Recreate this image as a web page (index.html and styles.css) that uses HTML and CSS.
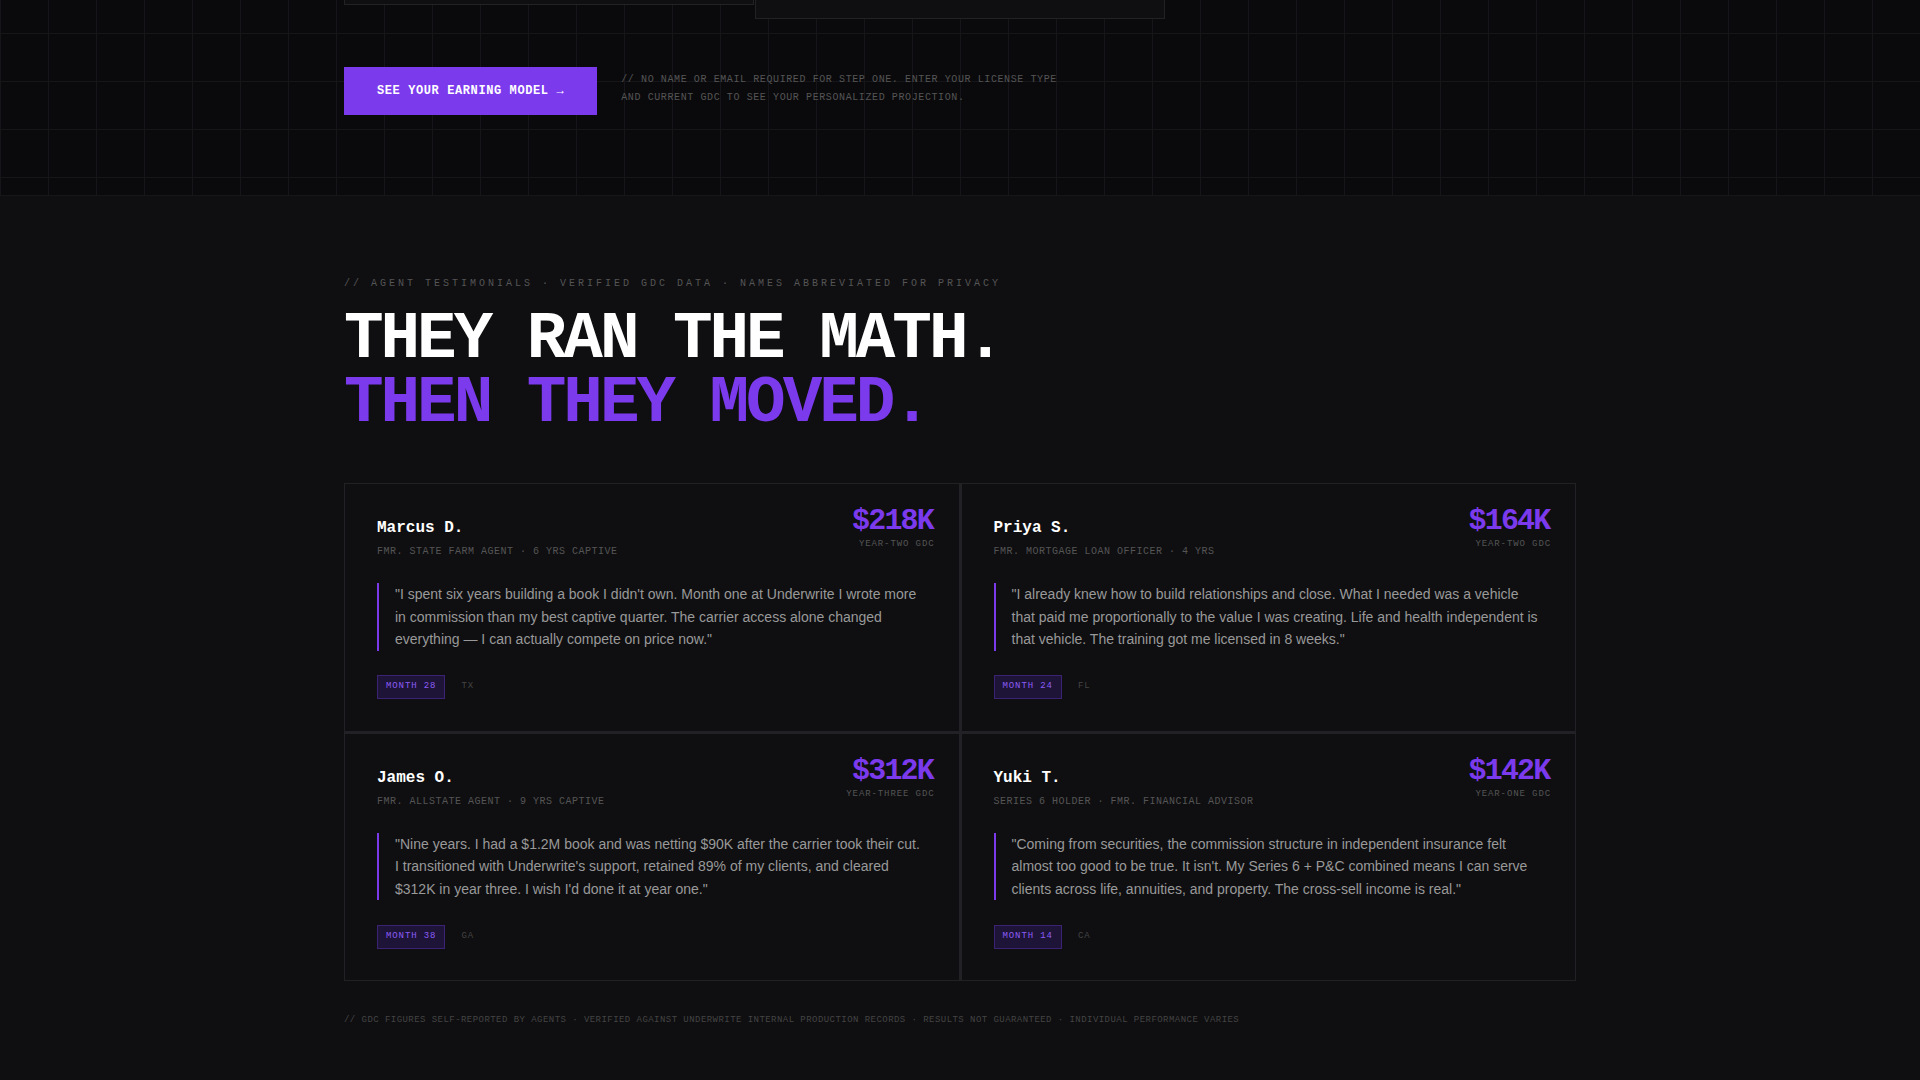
FILE: index.html
```html
<!DOCTYPE html>
<html lang="en">
<head>
  <meta charset="UTF-8" />
  <meta name="viewport" content="width=device-width, initial-scale=1" />
  <title>Underwrite - Agent Testimonials</title>
  <link rel="stylesheet" href="styles.css">
</head>
<body>

  <section class="hero">
    <div class="wrap">
      <div class="hero-boxes">
        <div class="hero-box hero-box-left"></div>
        <div class="hero-box hero-box-right"></div>
      </div>
      <div class="cta-row">
        <a href="#" class="cta">SEE YOUR EARNING MODEL →</a>
        <p class="cta-note">// NO NAME OR EMAIL REQUIRED FOR STEP ONE. ENTER YOUR LICENSE TYPE AND CURRENT GDC TO SEE YOUR PERSONALIZED PROJECTION.</p>
      </div>
    </div>
  </section>

  <section class="proof">
    <div class="wrap">
      <p class="eyebrow">// AGENT TESTIMONIALS · VERIFIED GDC DATA · NAMES ABBREVIATED FOR PRIVACY</p>
      <h2 class="headline">THEY RAN THE MATH.<br><span class="accent">THEN THEY MOVED.</span></h2>

      <div class="cards">
        <article class="card">
          <header class="card-top">
            <div>
              <h3 class="name">Marcus D.</h3>
              <p class="role">FMR. STATE FARM AGENT · 6 YRS CAPTIVE</p>
            </div>
            <div class="earn">
              <div class="earn-num">$218K</div>
              <div class="earn-label">YEAR-TWO GDC</div>
            </div>
          </header>
          <blockquote class="quote">"I spent six years building a book I didn't own. Month one at Underwrite I wrote more in commission than my best captive quarter. The carrier access alone changed everything — I can actually compete on price now."</blockquote>
          <footer class="card-foot">
            <span class="tag">MONTH 28</span>
            <span class="state">TX</span>
          </footer>
        </article>

        <article class="card">
          <header class="card-top">
            <div>
              <h3 class="name">Priya S.</h3>
              <p class="role">FMR. MORTGAGE LOAN OFFICER · 4 YRS</p>
            </div>
            <div class="earn">
              <div class="earn-num">$164K</div>
              <div class="earn-label">YEAR-TWO GDC</div>
            </div>
          </header>
          <blockquote class="quote">"I already knew how to build relationships and close. What I needed was a vehicle that paid me proportionally to the value I was creating. Life and health independent is that vehicle. The training got me licensed in 8 weeks."</blockquote>
          <footer class="card-foot">
            <span class="tag">MONTH 24</span>
            <span class="state">FL</span>
          </footer>
        </article>

        <article class="card">
          <header class="card-top">
            <div>
              <h3 class="name">James O.</h3>
              <p class="role">FMR. ALLSTATE AGENT · 9 YRS CAPTIVE</p>
            </div>
            <div class="earn">
              <div class="earn-num">$312K</div>
              <div class="earn-label">YEAR-THREE GDC</div>
            </div>
          </header>
          <blockquote class="quote">"Nine years. I had a $1.2M book and was netting $90K after the carrier took their cut. I transitioned with Underwrite's support, retained 89% of my clients, and cleared $312K in year three. I wish I'd done it at year one."</blockquote>
          <footer class="card-foot">
            <span class="tag">MONTH 38</span>
            <span class="state">GA</span>
          </footer>
        </article>

        <article class="card">
          <header class="card-top">
            <div>
              <h3 class="name">Yuki T.</h3>
              <p class="role">SERIES 6 HOLDER · FMR. FINANCIAL ADVISOR</p>
            </div>
            <div class="earn">
              <div class="earn-num">$142K</div>
              <div class="earn-label">YEAR-ONE GDC</div>
            </div>
          </header>
          <blockquote class="quote">"Coming from securities, the commission structure in independent insurance felt almost too good to be true. It isn't. My Series 6 + P&amp;C combined means I can serve clients across life, annuities, and property. The cross-sell income is real."</blockquote>
          <footer class="card-foot">
            <span class="tag">MONTH 14</span>
            <span class="state">CA</span>
          </footer>
        </article>
      </div>

      <p class="disclaimer">// GDC FIGURES SELF-REPORTED BY AGENTS · VERIFIED AGAINST UNDERWRITE INTERNAL PRODUCTION RECORDS · RESULTS NOT GUARANTEED · INDIVIDUAL PERFORMANCE VARIES</p>
    </div>
  </section>

</body>
</html>
```

FILE: styles.css
```css
/* Global Styles */
* {
  margin: 0;
  padding: 0;
  box-sizing: border-box;
}

body {
  font-family: "Liberation Mono", monospace;
  background-color: #0f0f11;
  color: #fff;
  overflow: hidden;
  height: 1080px;
}

a {
  text-decoration: none;
  color: inherit;
}

.wrap {
  width: 1232px;
  margin: 0 auto;
}

/* Hero tail */
.hero {
  height: 196px;
  background-color: #0a0a0c;
  background-image:
    linear-gradient(#16161a 1px, transparent 1px),
    linear-gradient(90deg, #16161a 1px, transparent 1px);
  background-size: 48px 48px;
  background-position: 0 -15px;
  border-bottom: 1px solid #16161a;
}

.hero-boxes {
  display: flex;
  align-items: flex-start;
  gap: 1px;
  height: 67px;
}

.hero-box {
  flex: 0 0 410px;
  background: #0f0f11;
  border: 1px solid #222226;
  border-top: none;
}

.hero-box-left {
  height: 5px;
}

.hero-box-right {
  height: 19px;
}

.cta-row {
  display: flex;
  align-items: flex-start;
  gap: 24px;
}

.cta {
  padding: 16px 32px;
  border: 1px solid #7c3aed;
  background: #7c3aed;
  color: #fff;
  font-size: 12px;
  line-height: 14px;
  font-weight: 700;
  letter-spacing: 0.05em;
}

.cta-note {
  max-width: 460px;
  padding-top: 4px;
  font-size: 10px;
  line-height: 18px;
  letter-spacing: 0.06em;
  color: #555;
}

/* Testimonials */
.proof {
  padding-top: 80px;
}

.eyebrow {
  font-size: 10px;
  line-height: 16px;
  letter-spacing: 0.3em;
  color: #555;
  margin-bottom: 16.3px;
}

.headline {
  font-size: 66px;
  line-height: 64px;
  font-weight: 700;
  letter-spacing: -3.05px;
  color: #fff;
  margin-bottom: 47px;
}

.accent {
  color: #7c3aed;
}

.cards {
  display: grid;
  grid-template-columns: 1fr 1fr;
  gap: 1px;
  background: #222226;
}

.card {
  background: #0f0f11;
  border: 1px solid #222226;
  padding: 32px 32px 31.6px;
}

.card-top {
  display: flex;
  justify-content: space-between;
  align-items: flex-start;
  height: 44px;
  margin-bottom: 23px;
}

.name {
  font-size: 16px;
  line-height: 24px;
  font-weight: 700;
  color: #fff;
}

.role {
  font-size: 10px;
  line-height: 16px;
  letter-spacing: 0.05em;
  color: #555;
  margin-top: 4px;
}

.earn {
  margin: -11px -8px 0 0;
  text-align: right;
}

.earn-num {
  padding-right: 1.5px;
  font-size: 30px;
  line-height: 32px;
  font-weight: 700;
  letter-spacing: -1.8px;
  color: #7c3aed;
}

.earn-label {
  font-size: 9px;
  line-height: 12px;
  letter-spacing: 0.1em;
  color: #555;
  margin-top: 1px;
}

.quote {
  border-left: 2px solid #7c3aed;
  padding-left: 16px;
  font-family: "Liberation Sans", Arial, sans-serif;
  font-size: 14px;
  line-height: 22.4px;
  color: #999;
  margin-bottom: 24.7px;
}

.card-foot {
  display: flex;
  align-items: center;
  gap: 16px;
}

.tag {
  padding: 4px 8px 6px;
  border: 1px solid #3b2272;
  background: #1e1438;
  font-size: 9px;
  line-height: 12px;
  letter-spacing: 0.1em;
  color: #8b5cf6;
}

.state {
  padding-bottom: 2px;
  font-size: 9px;
  line-height: 12px;
  letter-spacing: 0.1em;
  color: #444;
}

.disclaimer {
  margin-top: 32.5px;
  font-size: 9px;
  line-height: 12px;
  letter-spacing: 0.05em;
  color: #444;
}
```
